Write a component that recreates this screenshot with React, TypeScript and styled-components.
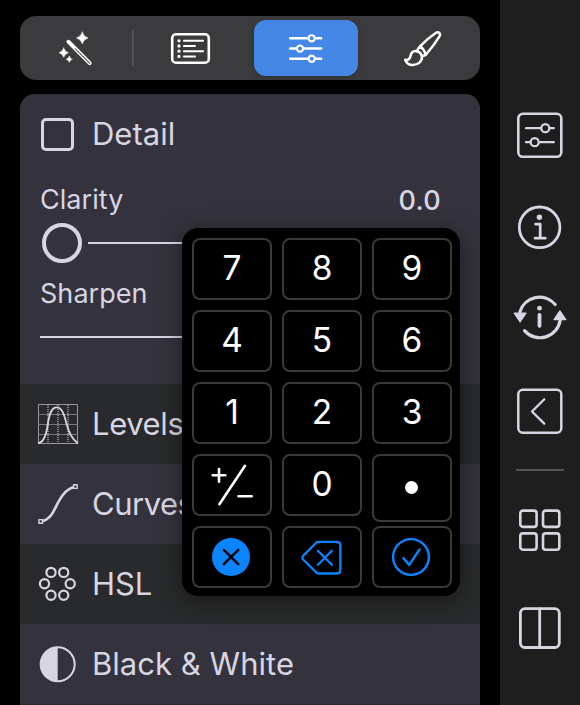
import React from 'react';
import styled, { createGlobalStyle, css } from 'styled-components';

const ink = '#d7d5e2';
const accent = '#0a84ff';

const GlobalStyle = createGlobalStyle`
  *, *::before, *::after { box-sizing: border-box; }
  body {
    margin: 0;
    background: #000;
    font-family: Inter, "Liberation Sans", sans-serif;
    overflow: hidden;
  }
  svg { display: block; flex: none; overflow: visible; }
`;

const Screen = styled.div`
  display: flex;
  width: 580px;
  height: 705px;
  background: #000;
  overflow: hidden;
`;

const Main = styled.main`
  position: relative;
  display: flex;
  flex-direction: column;
  gap: 14px;
  width: 500px;
  padding: 16px 20px 0;
`;

const TabBar = styled.nav`
  display: flex;
  align-items: center;
  flex: none;
  height: 64px;
  border-radius: 16px;
  background: #3b3b3e;
`;

const Tab = styled.button<{ $width: number; $active?: boolean }>`
  display: flex;
  align-items: center;
  justify-content: center;
  flex: none;
  width: ${(p) => p.$width}px;
  height: 56px;
  padding: 1px 0 0;
  border: 0;
  border-radius: 12px;
  color: #fff;
  background: transparent;
  ${(p) =>
    p.$active &&
    css`
      margin: 0 7px;
      background: #4587e6;
      box-shadow: 0 2px 6px rgba(0, 0, 0, 0.15);
    `}
`;

const TabDivider = styled.span`
  width: 2px;
  height: 36px;
  background: #515154;
`;

const Panel = styled.section`
  flex: none;
  height: 611px;
  border-radius: 15px 15px 0 0;
  background: #292a2b;
  overflow: hidden;
`;

const DetailSection = styled.div`
  height: 290px;
  background: #34333d;
`;

const Heading = styled.div`
  display: flex;
  align-items: center;
  height: 80px;
  padding-left: 21px;
`;

const CheckBox = styled.span`
  width: 33px;
  height: 33px;
  border: 3px solid ${ink};
  border-radius: 5px;
  margin-right: 18px;
`;

const Title = styled.span<{ $spacing?: number }>`
  font-size: 31px;
  line-height: 40px;
  letter-spacing: ${(p) => p.$spacing ?? 0}px;
  white-space: nowrap;
  color: ${ink};
`;

const Field = styled.div<{ $height: number }>`
  display: flex;
  justify-content: space-between;
  align-items: center;
  height: ${(p) => p.$height}px;
  padding: 0 39px 0 20px;
  font-size: 27px;
  color: ${ink};
`;

const FieldName = styled.span`
  letter-spacing: 0.05px;
`;

const FieldValue = styled.span`
  padding-top: 2px;
  font-weight: 500;
  font-size: 27px;
  letter-spacing: 0.3px;
`;

const Slider = styled.div<{ $height: number }>`
  display: flex;
  align-items: center;
  gap: 6px;
  height: ${(p) => p.$height}px;
  padding: 0 20px;
`;

const Thumb = styled.span`
  width: 40px;
  height: 40px;
  margin-left: 2px;
  border: 4px solid ${ink};
  border-radius: 50%;
`;

const Track = styled.span`
  flex: 1;
  height: 2px;
  background: ${ink};
`;

const ToolRow = styled.div<{ $dark?: boolean }>`
  display: flex;
  align-items: center;
  gap: 14px;
  height: 80px;
  padding-left: 18px;
  background: ${(p) => (p.$dark ? '#292a2b' : '#34333d')};
`;

const Keypad = styled.div`
  position: absolute;
  left: 182px;
  top: 228px;
  display: grid;
  grid-template-columns: repeat(3, 80px);
  grid-auto-rows: 62px;
  gap: 10px;
  width: 278px;
  height: 368px;
  padding: 10px 8px 8px 10px;
  border-radius: 16px;
  background: #000;
  box-shadow: 0 4px 22px rgba(0, 0, 0, 0.45);
`;

const Key = styled.button<{ $tall?: boolean }>`
  display: flex;
  align-items: center;
  justify-content: center;
  height: ${(p) => (p.$tall ? 68 : 62)}px;
  padding: 0 0 2px;
  border: 2px solid #3a3a3b;
  border-radius: 8px;
  background: #000;
  color: #fff;
  font: 400 33.5px/40px Inter, "Liberation Sans", sans-serif;
`;

const Dot = styled.span`
  width: 13px;
  height: 13px;
  margin: 1px 1px 0 0;
  border-radius: 50%;
  background: #fff;
`;

const SideBar = styled.aside`
  display: flex;
  flex-direction: column;
  align-items: center;
  width: 80px;
  padding-top: 112px;
  background: #1e1e1e;
  color: ${ink};
`;

const SideButton = styled.button<{ $after: number }>`
  padding: 0;
  border: 0;
  margin-bottom: ${(p) => p.$after}px;
  background: none;
  color: inherit;
`;

const SideDivider = styled.span`
  width: 48px;
  height: 2px;
  margin-bottom: 37px;
  background: #555457;
`;

type GlyphProps = {
  w: number;
  h: number;
  stroke?: number;
  color?: string;
  children: React.ReactNode;
};

const Glyph = ({ w, h, stroke = 2, color = 'currentColor', children }: GlyphProps) => (
  <svg
    width={w}
    height={h}
    viewBox={`0 0 ${w} ${h}`}
    fill="none"
    stroke={color}
    strokeWidth={stroke}
    strokeLinecap="round"
    strokeLinejoin="round"
  >
    {children}
  </svg>
);

const star = (x: number, y: number, r: number) => {
  const k = r * 0.22;
  return `M${x} ${y - r}Q${x + k} ${y - k} ${x + r} ${y}Q${x + k} ${y + k} ${x} ${y + r}Q${x - k} ${y + k} ${x - r} ${y}Q${x - k} ${y - k} ${x} ${y - r}Z`;
};

const WandIcon = () => (
  <Glyph w={40} h={38}>
    <path
      d={star(26.3, 8, 5.8) + star(7.7, 22.7, 4.6) + star(13.3, 29.3, 3)}
      fill="currentColor"
      strokeWidth={0.6}
    />
    <path d="M12.4 11.7L33.7 33.2" strokeWidth={3.9} />
    <path d="M19.5 18.8L33.6 33.1" stroke="#3b3b3e" strokeWidth={1.2} />
    <path d="M20.5 19.8L33 32.5" strokeWidth={0.6} strokeDasharray="1.5 2" />
  </Glyph>
);

const ListIcon = () => (
  <Glyph w={39} h={31}>
    <rect x="1.2" y="1.2" width="36.6" height="28.6" rx="3.8" strokeWidth={2.6} />
    <path d="M12.9 7.8H32M12.9 13H24M12.9 18.2H32M12.9 23.4H24" strokeWidth={2} />
    <path d="M8 7.8h0M8 13h0M8 18.2h0M8 23.4h0" strokeWidth={3.3} />
  </Glyph>
);

const SlidersIcon = () => (
  <Glyph w={36} h={31} stroke={2.5}>
    <path d="M2.2 5.3H20.4M27 5.3H33.2M2.2 15.6H8.7M15.3 15.6H33.2M2.2 25.7H20.4M27 25.7H33.2" />
    <circle cx="23.7" cy="5.3" r="3.1" strokeWidth={2.1} />
    <circle cx="12" cy="15.6" r="3.1" strokeWidth={2.1} />
    <circle cx="23.7" cy="25.7" r="3.1" strokeWidth={2.1} />
  </Glyph>
);

const BrushIcon = () => (
  <Glyph w={38} h={38} stroke={2.5}>
    <path d="M16.3 16.2C21.4 10.8 26.3 6.6 31.7 3C34.7 1 37.2 3.6 35.3 6.7C31.7 12.5 27.2 18.6 22.3 24.2C21.4 25.3 20 25.8 18.6 26" />
    <path d="M16.3 16.2C14.6 18 13.5 19.4 12.8 21.2M16.3 16.2C18.7 18.2 20.8 20.6 21.6 24.6M12.8 21.2C15.2 21.8 17.5 24 17.9 26.3" />
    <path d="M12.8 21.2C9.7 20.5 7.2 22.3 6.7 25.2C6.2 28.6 4.5 30.3 1.2 29.8C2.6 33.3 5.3 35.2 8.8 35.1C14.4 35 18.6 31 17.9 26.3" />
  </Glyph>
);

const LevelsIcon = () => (
  <Glyph w={40} h={40} color={ink}>
    <g strokeWidth={1} stroke="#99989f" strokeLinecap="butt">
      <rect x="0.5" y="0.5" width="39" height="39" />
      <path d="M0 10.5H40M0 20.5H40M0 30.5H40" stroke="#77767c" />
      <path d="M10 1V40M20 1V40M30 1V40" strokeWidth={1.6} strokeDasharray="1 1" />
    </g>
    <path
      d="M0.7 39C6.2 38 8.4 29.5 9.6 21.5C11.2 10 13.4 3.4 18.7 3.4C24.4 3.4 26.3 11.4 28.6 20C31 29.5 34.7 35.4 39.5 39"
      strokeWidth={1.8}
    />
  </Glyph>
);

const CurvesIcon = () => (
  <Glyph w={40} h={40} color={ink}>
    <path d="M5 37C14 34.4 16.4 25 20.4 17.8C24.4 10.4 28.6 5 35.6 3" strokeWidth={2.6} />
    <rect x="0.9" y="35.6" width="3.6" height="3.6" strokeWidth={1.4} fill="#34333d" />
    <rect x="35.6" y="0.8" width="3.6" height="3.6" strokeWidth={1.4} fill="#34333d" />
  </Glyph>
);

const HslIcon = () => (
  <Glyph w={40} h={40} stroke={2.2} color={ink}>
    {[
      [13, 8.4],
      [25.7, 8.4],
      [6.5, 19.8],
      [32.2, 19.8],
      [13, 31.3],
      [25.7, 31.3],
    ].map(([x, y]) => (
      <circle key={`${x}-${y}`} cx={x} cy={y} r={4.6} />
    ))}
  </Glyph>
);

const ContrastIcon = () => (
  <Glyph w={40} h={40} color={ink}>
    <circle cx="19.7" cy="20.2" r="17" />
    <path d="M19.7 3.2A17 17 0 0 0 19.7 37.2Z" fill={ink} stroke="none" />
  </Glyph>
);

const PlusMinusIcon = () => (
  <Glyph w={42} h={42} stroke={2.6}>
    <path d="M8 6V18.7M1.7 12.3H14.3M34 2.8L8.4 41.2M27.5 33.2H40.7" />
  </Glyph>
);

const CancelIcon = () => (
  <Glyph w={40} h={40} stroke={2.5}>
    <circle cx="19" cy="21" r="19" fill={accent} stroke="none" />
    <path d="M11.8 13.8L26.2 28.2M26.2 13.8L11.8 28.2" stroke="#000" />
  </Glyph>
);

const BackspaceIcon = () => (
  <Glyph w={44} h={32} stroke={2.3} color={accent}>
    <path d="M18.1 1.9H36.9Q40.4 1.9 40.4 5.4V30Q40.4 33.5 36.9 33.5H18.7Q17.3 33.5 16.2 32.4L3.6 20Q1.2 17.7 3.6 15.4L15.9 3Q17 1.9 18.1 1.9Z" />
    <path d="M17.9 10.7L31.9 24.7M31.9 10.7L17.9 24.7" />
  </Glyph>
);

const ConfirmIcon = () => (
  <Glyph w={40} h={40} stroke={2.4} color={accent}>
    <circle cx="19" cy="21" r="17.9" />
    <path d="M11.4 22.1L17.2 28.9L27.5 13.5" />
  </Glyph>
);

const AdjustBoxIcon = () => (
  <Glyph w={46} h={46} stroke={2.3}>
    <rect x="1.3" y="1.8" width="43" height="43" rx="4.5" strokeWidth={2.6} />
    <path d="M9 16.2H24M33 16.2H36.8M9 30.2H13.2M22 30.2H36.8" />
    <circle cx="28.3" cy="16.2" r="4" />
    <circle cx="17.7" cy="30.2" r="4" />
  </Glyph>
);

const InfoIcon = () => (
  <Glyph w={44} h={44}>
    <circle cx="21.6" cy="22.3" r="20.3" strokeWidth={2.8} />
    <circle cx="21.4" cy="12.2" r="2.7" fill="currentColor" stroke="none" />
    <path d="M17.6 19.2H22.2V33.2M17 33.2H27.3" strokeWidth={2.7} />
  </Glyph>
);

const SyncInfoIcon = () => (
  <Glyph w={54} h={46} stroke={3.2}>
    <path d="M6.9 18A20.4 20.4 0 0 1 42.2 10.6M11.5 36.6A20.4 20.4 0 0 0 47.2 26" />
    <path
      d="M1.2 19.2H13L7.1 28ZM41 25.6H52.8L46.9 16.8Z"
      fill="currentColor"
      strokeWidth={1.2}
    />
    <circle cx="26.5" cy="14.2" r="2.4" fill="currentColor" stroke="none" />
    <path d="M26.5 20.8V31.8" strokeWidth={3.8} />
  </Glyph>
);

const BackBoxIcon = () => (
  <Glyph w={46} h={46} stroke={2.3}>
    <rect x="1.3" y="1.8" width="43" height="43" rx="4.5" strokeWidth={2.5} />
    <path d="M27.3 11.2L15 23.5L27.3 35.6" />
  </Glyph>
);

const GridIcon = () => (
  <Glyph w={44} h={44} stroke={2.6}>
    <rect x="2.3" y="2.6" width="16.3" height="16.3" rx="2.6" />
    <rect x="25" y="2.6" width="16.3" height="16.3" rx="2.6" />
    <rect x="2.3" y="25.4" width="16.3" height="16.3" rx="2.6" />
    <rect x="25" y="25.4" width="16.3" height="16.3" rx="2.6" />
  </Glyph>
);

const SplitIcon = () => (
  <Glyph w={44} h={44} stroke={2.8}>
    <rect x="2.4" y="2.6" width="38.9" height="38.9" rx="4.5" />
    <path d="M21.7 3V41" />
  </Glyph>
);

const tools = [
  { name: 'Levels', icon: <LevelsIcon />, dark: true, spacing: -0.4 },
  { name: 'Curves', icon: <CurvesIcon />, dark: false, spacing: -0.5 },
  { name: 'HSL', icon: <HslIcon />, dark: true, spacing: -0.1 },
  { name: 'Black & White', icon: <ContrastIcon />, dark: false, spacing: 0.03 },
];

const keys: { id: string; face: React.ReactNode; tall?: boolean }[] = [
  ...['7', '8', '9', '4', '5', '6', '1', '2', '3'].map((d) => ({ id: d, face: d })),
  { id: 'sign', face: <PlusMinusIcon /> },
  { id: '0', face: '0' },
  { id: 'point', face: <Dot />, tall: true },
  { id: 'cancel', face: <CancelIcon /> },
  { id: 'backspace', face: <BackspaceIcon /> },
  { id: 'confirm', face: <ConfirmIcon /> },
];

export default function App() {
  return (
    <>
      <GlobalStyle />
      <Screen>
        <Main>
          <TabBar>
            <Tab $width={112}><WandIcon /></Tab>
            <TabDivider />
            <Tab $width={113}><ListIcon /></Tab>
            <Tab $width={104} $active><SlidersIcon /></Tab>
            <Tab $width={115}><BrushIcon /></Tab>
          </TabBar>
          <Panel>
            <DetailSection>
              <Heading>
                <CheckBox />
                <Title>Detail</Title>
              </Heading>
              <Field $height={50}>
                <FieldName>Clarity</FieldName>
                <FieldValue>0.0</FieldValue>
              </Field>
              <Slider $height={38}>
                <Thumb />
                <Track />
              </Slider>
              <Field $height={62}>
                <FieldName>Sharpen</FieldName>
              </Field>
              <Slider $height={26}>
                <Track />
              </Slider>
            </DetailSection>
            {tools.map((t) => (
              <ToolRow key={t.name} $dark={t.dark}>
                {t.icon}
                <Title $spacing={t.spacing}>{t.name}</Title>
              </ToolRow>
            ))}
          </Panel>
          <Keypad>
            {keys.map((k) => (
              <Key key={k.id} $tall={k.tall}>{k.face}</Key>
            ))}
          </Keypad>
        </Main>
        <SideBar>
          <SideButton $after={47}><AdjustBoxIcon /></SideButton>
          <SideButton $after={45}><InfoIcon /></SideButton>
          <SideButton $after={48}><SyncInfoIcon /></SideButton>
          <SideButton $after={35}><BackBoxIcon /></SideButton>
          <SideDivider />
          <SideButton $after={54}><GridIcon /></SideButton>
          <SideButton $after={0}><SplitIcon /></SideButton>
        </SideBar>
      </Screen>
    </>
  );
}
